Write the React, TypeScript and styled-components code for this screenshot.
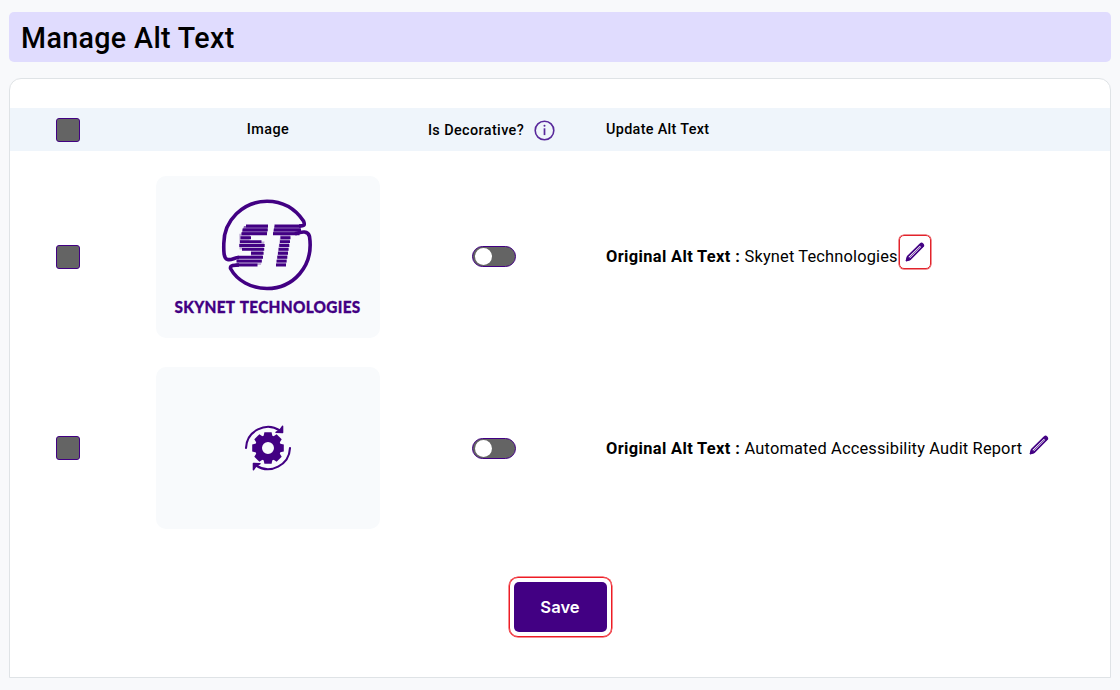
import React from 'react';
import styled, { createGlobalStyle } from 'styled-components';

const Global = createGlobalStyle`
  * { box-sizing: border-box; }
  body { margin: 0; background: #f8f9fb; font-family: Roboto, "Liberation Sans", sans-serif; color: #000; }
`;
const Page = styled.main`
  display: flex; flex-direction: column; gap: 16px; height: 690px; padding: 12px 9px;
`;
const Title = styled.h1`
  margin: 0; height: 50px; padding-left: 12px; background: #e0dcfe; border-radius: 5px;
  font-size: 28.6px; font-weight: 500; line-height: 52px; letter-spacing: 0.38px;
`;
const Card = styled.section`
  height: 600px; padding-top: 29px; background: #fff; border: 1px solid #dfe3e6; border-radius: 12px 12px 0 0;
`;
const Row = styled.div<{ $h?: number }>`
  display: grid; grid-template-columns: 116px 284px 168px 1fr; align-items: center; justify-items: center;
  height: ${p => p.$h ?? 192}px;
`;
const HeadRow = styled(Row)`
  height: 43px; margin-bottom: 10px; background: #eff5fb; font-size: 14.4px; font-weight: 500;
`;
const Label = styled.span<{ $ls: number }>`
  letter-spacing: ${p => p.$ls}px; white-space: nowrap;
`;
const Left = styled.div`
  justify-self: start; display: flex; align-items: center; padding-left: 28px; font-size: 16.4px; white-space: pre;
`;
const HeadLeft = styled(Left)`font-size: 14.4px;`;
const Decorative = styled.div`
  display: flex; align-items: center; gap: 10px; margin-right: 5px; padding-top: 1px;
`;
const Check = styled.span`
  width: 24px; height: 24px; background: #646464; border: 1px solid #420083; border-radius: 3px;
`;
const Tile = styled.div`
  display: flex; align-items: center; justify-content: center; width: 224px; height: 162px;
  background: #f8fafc; border-radius: 10px;
`;
const Switch = styled.span`
  display: flex; align-items: center; width: 44px; height: 21px; padding-left: 1.5px;
  background: #646464; border: 1px solid #420083; border-radius: 11px;
  &::before { content: ""; width: 17px; height: 17px; border-radius: 50%; background: #fff; }
`;
const Strong = styled.b<{ $ls: number }>`font-weight: 700; letter-spacing: ${p => p.$ls}px;`;
const Edit = styled.span<{ $marked?: boolean }>`
  display: flex; align-items: center; justify-content: center; width: 32px; height: 34px;
  margin: ${p => (p.$marked ? '-9px 0 0 1px' : '-7px 0 0 1px')};
  border: 1px solid ${p => (p.$marked ? '#e2232b' : 'transparent')}; border-radius: 5px;
  box-shadow: 0 0 0 .5px ${p => (p.$marked ? '#e2232b' : 'transparent')};
`;
const Actions = styled.div`display: flex; justify-content: center; padding-top: 33px;`;
const SaveFrame = styled.div`padding: 4px; border: 1px solid #ee1c25; border-radius: 9px; box-shadow: 0 0 0 .5px #ee1c25;`;
const Save = styled.button`
  display: block; width: 93px; height: 50px; padding: 0; border: 0; border-radius: 5px; background: #420083;
  color: #fff; font: 600 16.6px Inter, sans-serif;
`;

const Pencil = () => (
  <svg width="20" height="20" viewBox="0 0 20 20" fill="none" stroke="#420083" strokeWidth="1.7" strokeLinejoin="round">
    <path d="M1.6 18.4 2.6 14.6 15.6 1.8Q16.6 1 17.7 2.1T18.1 4.2L5.3 17.2Z" />
    <path d="M4 16 15.6 4.3" strokeWidth=".7" />
    <path d="m14.6 2.8 2.5 2.5.9-1.2-1.9-2Z" fill="#420083" strokeWidth="1" />
    <path d="m1.6 18.4 1-3 2.1 2Z" fill="#420083" />
  </svg>
);
const Info = () => (
  <svg width="21" height="21" viewBox="0 0 21 21" fill="none" stroke="#58289b">
    <circle cx="10.5" cy="10.5" r="9.3" strokeWidth="1.6" />
    <path d="M10.5 8.3v6.8" strokeWidth="1.7" /><circle cx="10.5" cy="5.8" r="1" fill="#58289b" stroke="none" />
  </svg>
);

/* Each entry is one stripe: S start, S end, T start, T end. */
const stripes: number[][] = [
  [31, 53, 59.5, 86], [27.5, 52.7, 58.8, 86], [26.5, 52, 58, 84.5], [25.5, 36, 65.5, 75.5],
  [25, 46.5, 65, 75], [24.3, 49.7, 64.3, 74.3], [27, 49.2, 63.6, 73.6], [36, 48.6, 63, 73],
  [22.5, 48, 62.3, 72.3], [21.5, 46.8, 61.6, 71.6], [20.5, 42.5, 61, 71],
];
const SkynetLogo = () => (
  <svg width="224" height="162" viewBox="0 0 224 162" fill="none" stroke="#420083">
    <g transform="translate(59 18.5)">
      <path d="M24 63C19 63 17 66 12.5 65C8 64 8.8 54 8.8 49C8.8 26 28 6.8 52 6.8C67 6.8 80 14 88.5 26.5C90.5 31 89 31.5 84 31.5" strokeWidth="3.6" />
      <path d="M80 39.3C87 37 93.2 36 94.5 42C99 72 78 94 52 94C36 94 22 86 15.5 74C15 70.5 19 70.5 24 70.5" strokeWidth="3.6" />
      <path d="M29 31.5H53L52 39.3H26.5ZM59.5 31.5H86L84.5 39.3H58Z" fill="#420083" stroke="none" opacity=".6" />
      <path d="M24.3 39.3H35L34.5 47H49.5L46 70.5H21.5L22.5 62.7H36V55H24.5ZM65.5 39.3H75.5L71 70.5H61Z" fill="#420083" stroke="none" opacity=".3" />
      {stripes.map((s, i) => (
        <path key={i} d={`M${s[0]} ${31.5 + i * 3.9}H${s[1]}M${s[2]} ${31.5 + i * 3.9}H${s[3]}`} strokeWidth="2.9" />
      ))}
    </g>
    <text x="18.5" y="137" textLength="186" lengthAdjust="spacingAndGlyphs" fill="#420083" stroke="#420083" strokeWidth=".3"
      fontFamily="Lato, sans-serif" fontWeight="900" fontSize="16.5" letterSpacing=".3" wordSpacing="1.5">SKYNET TECHNOLOGIES</text>
  </svg>
);
const GearCycle = () => (
  <svg width="48" height="48" viewBox="0 0 48 48" fill="none" stroke="#420083">
    <circle cx="24" cy="24" r="9.5" strokeWidth="7" />
    {[0, 45, 90, 135, 180, 225, 270, 315].map(a => (
      <path key={a} d="M19.4 13 20.4 8.2h7.2l1 4.8Z" fill="#420083" stroke="none" transform={`rotate(${a} 24 24)`} />
    ))}
    <g strokeWidth="2.1" strokeLinecap="round" strokeLinejoin="round">
      <path d="M2 24A22 22 0 0 1 36 6.5" /><path d="M32 8.4 38.6 8.6 38.6 2.2 36 5.8Z" fill="#420083" strokeWidth="1.4" />
      <path d="M46 24A22 22 0 0 1 12 41.5" /><path d="M16 39.6 9.4 39.4 9.4 45.8 12 42.2Z" fill="#420083" strokeWidth="1.4" />
    </g>
  </svg>
);

export default function App() {
  return (
    <>
      <Global />
      <Page>
        <Title>Manage Alt Text</Title>
        <Card>
          <HeadRow>
            <Check />
            <Label $ls={0.45}>Image</Label>
            <Decorative><Label $ls={0.4}>Is Decorative?</Label><Info /></Decorative>
            <HeadLeft><Label $ls={0.32}>Update Alt Text</Label></HeadLeft>
          </HeadRow>
          <Row $h={191}>
            <Check />
            <Tile><SkynetLogo /></Tile>
            <Switch />
            <Left><Strong $ls={0.37}>Original Alt Text : </Strong><Label $ls={0.16}>Skynet Technologies</Label><Edit $marked><Pencil /></Edit></Left>
          </Row>
          <Row $h={192}>
            <Check />
            <Tile><GearCycle /></Tile>
            <Switch />
            <Left><Strong $ls={0.37}>Original Alt Text : </Strong><Label $ls={0.17}>Automated Accessibility Audit Report</Label><Edit><Pencil /></Edit></Left>
          </Row>
          <Actions><SaveFrame><Save>Save</Save></SaveFrame></Actions>
        </Card>
      </Page>
    </>
  );
}
